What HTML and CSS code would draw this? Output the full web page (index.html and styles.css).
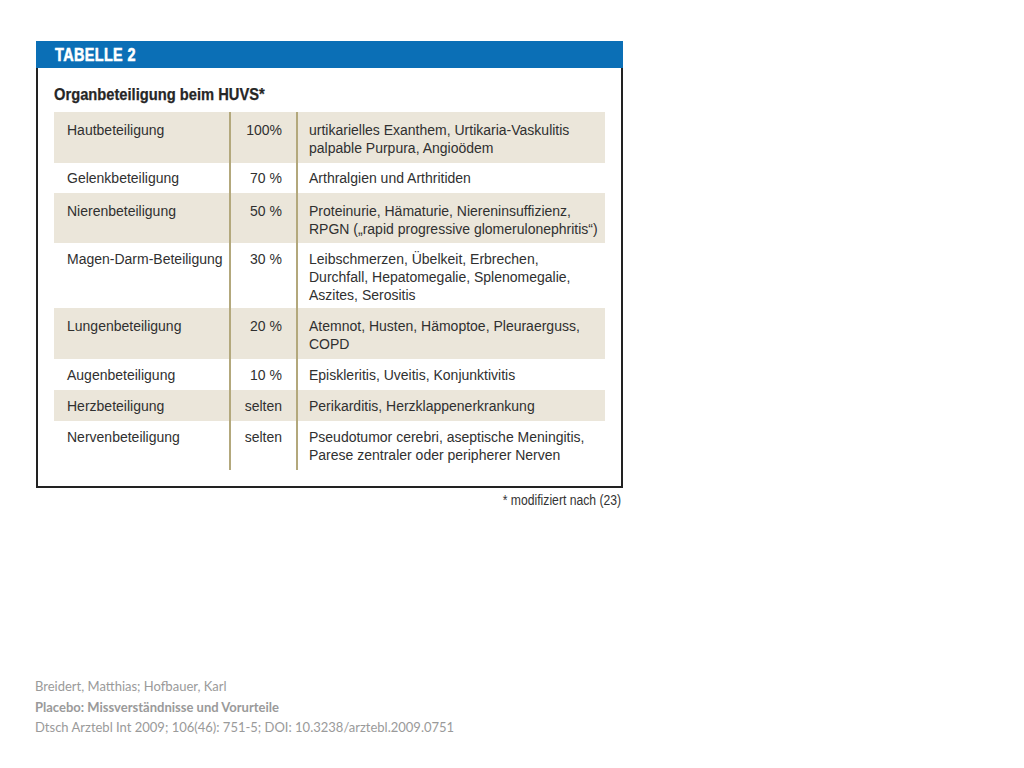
FILE: index.html
```html
<!DOCTYPE html>
<html lang="de">
<head>
<meta charset="utf-8">
<title>Tabelle 2</title>
<link rel="stylesheet" href="styles.css">
</head>
<body>
<div class="page">
  <div class="figure">
    <div class="head"><span class="narrow">TABELLE 2</span></div>
    <div class="panel">
      <div class="subtitle"><span class="narrow">Organbeteiligung beim HUVS*</span></div>
      <table class="grid">
        <tr class="shade h51"><td class="c1">Hautbeteiligung</td><td class="c2">100%</td><td class="c3">urtikarielles Exanthem, Urtikaria-Vaskulitis<br>palpable Purpura, Angioödem</td></tr>
        <tr class="h30"><td class="c1">Gelenkbeteiligung</td><td class="c2">70 %</td><td class="c3">Arthralgien und Arthritiden</td></tr>
        <tr class="shade h50"><td class="c1">Nierenbeteiligung</td><td class="c2">50 %</td><td class="c3">Proteinurie, Hämaturie, Niereninsuffizienz,<br>RPGN („rapid progressive glomerulonephritis“)</td></tr>
        <tr class="h65"><td class="c1">Magen-Darm-Beteiligung</td><td class="c2">30 %</td><td class="c3">Leibschmerzen, Übelkeit, Erbrechen,<br>Durchfall, Hepatomegalie, Splenomegalie,<br>Aszites, Serositis</td></tr>
        <tr class="shade h51"><td class="c1">Lungenbeteiligung</td><td class="c2">20 %</td><td class="c3">Atemnot, Husten, Hämoptoe, Pleuraerguss,<br>COPD</td></tr>
        <tr class="h31"><td class="c1">Augenbeteiligung</td><td class="c2">10 %</td><td class="c3">Episkleritis, Uveitis, Konjunktivitis</td></tr>
        <tr class="shade h31"><td class="c1">Herzbeteiligung</td><td class="c2">selten</td><td class="c3">Perikarditis, Herzklappenerkrankung</td></tr>
        <tr class="h49"><td class="c1">Nervenbeteiligung</td><td class="c2">selten</td><td class="c3">Pseudotumor cerebri, aseptische Meningitis,<br>Parese zentraler oder peripherer Nerven</td></tr>
      </table>
    </div>
    <div class="footnote"><span class="narrow-r">* modifiziert nach (23)</span></div>
  </div>
  <div class="citation">
    <div>Breidert, Matthias; Hofbauer, Karl</div>
    <div class="bold">Placebo: Missverständnisse und Vorurteile</div>
    <div>Dtsch Arztebl Int 2009; 106(46): 751-5; DOI: 10.3238/arztebl.2009.0751</div>
  </div>
</div>
</body>
</html>
```

FILE: styles.css
```css
html, body {
  margin: 0;
  padding: 0;
  background: #ffffff;
}
.page {
  width: 1024px;
  height: 768px;
  padding: 41px 0 0 36px;
  box-sizing: border-box;
  font-family: "Liberation Sans", Arial, sans-serif;
  color: #2b2b2b;
}
.figure {
  width: 587px;
}
.narrow {
  display: inline-block;
  transform-origin: left center;
  white-space: nowrap;
}
.narrow-r {
  display: inline-block;
  transform-origin: right center;
  transform: scaleX(0.87);
  white-space: nowrap;
}
.head {
  height: 27px;
  background: #0b6fb6;
  color: #ffffff;
  font-weight: bold;
  font-size: 18px;
  line-height: 29px;
  padding-left: 19px;
}
.head .narrow {
  transform: scaleX(0.8);
  letter-spacing: 0.5px;
  -webkit-text-stroke: 0.6px #ffffff;
}
.panel {
  border: 2px solid #222222;
  border-top: none;
  padding: 16px 16px 16px 16px;
}
.subtitle {
  font-weight: bold;
  font-size: 17px;
  line-height: 22px;
  margin-bottom: 6px;
  color: #262626;
}
.subtitle .narrow {
  transform: scaleX(0.865);
  -webkit-text-stroke: 0.25px #262626;
}
.grid {
  width: 551px;
  border-collapse: collapse;
  table-layout: fixed;
  font-size: 14px;
  line-height: 18px;
  color: #303030;
}
.grid td {
  vertical-align: top;
  padding-top: 9px;
  padding-bottom: 0;
  white-space: nowrap;
}
.shade td {
  background: #ebe6da;
}
.c1 {
  width: 161px;
  padding-left: 13px;
}
.c2 {
  width: 50px;
  text-align: right;
  padding-right: 14px;
  border-left: 2px solid #b3a87c;
  border-right: 2px solid #b3a87c;
}
.c3 {
  padding-left: 11px;
}
.h30 { height: 30px; }
.h31 { height: 31px; }
.h49 { height: 49px; }
.h50 { height: 50px; }
.h51 { height: 51px; }
.h65 { height: 65px; }
.grid .h30 td { padding-top: 6px; }
.grid .h31 td,
.grid .h49 td,
.grid .h65 td { padding-top: 7px; }
.footnote {
  text-align: right;
  font-size: 14px;
  line-height: 16px;
  margin-top: 4px;
  padding-right: 2px;
  color: #333333;
}
.citation {
  margin-top: 168px;
  margin-left: -1px;
  font-family: "Lato", "Open Sans", sans-serif;
  font-size: 13px;
  line-height: 20.5px;
  color: #9a9a9a;
}
.citation .bold {
  font-weight: bold;
}
```
